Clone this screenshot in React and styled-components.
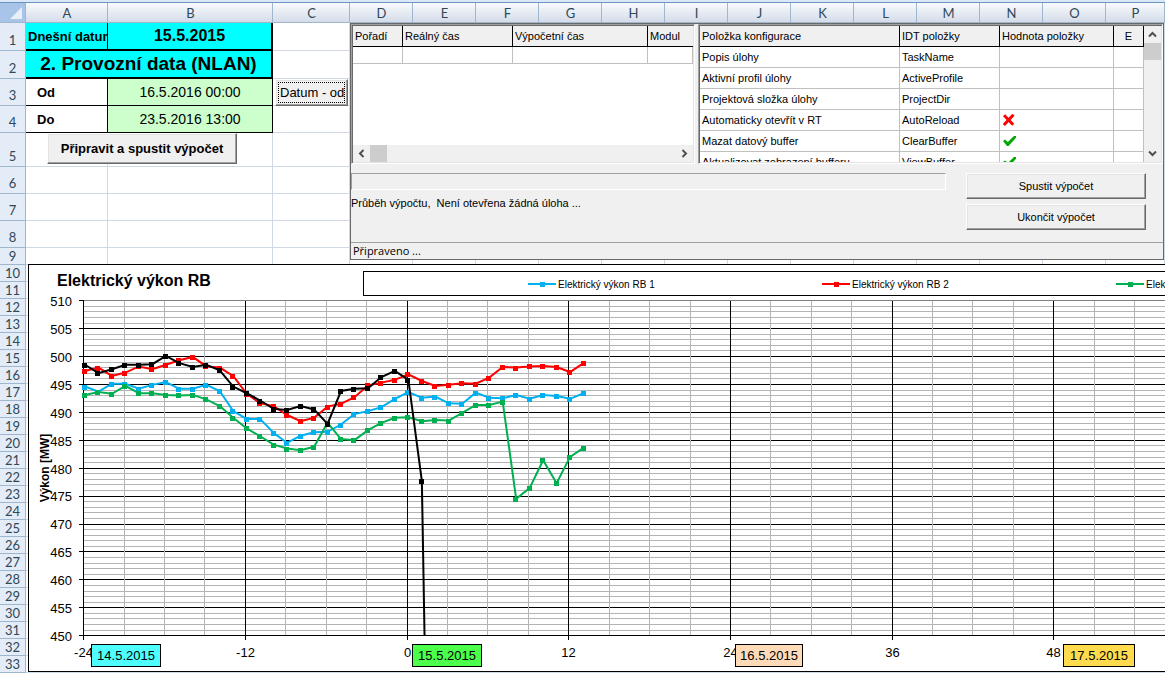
import styled, { createGlobalStyle } from 'styled-components';

const GlobalStyle = createGlobalStyle`
  * {
    box-sizing: border-box;
  }

  body {
    margin: 0;
    background: #fff;
    color: #000;
    font-family: 'Liberation Sans', Arial, sans-serif;
    overflow: hidden;
  }

  button {
    font-family: inherit;
    color: inherit;
    padding: 0;
  }

  table {
    border-collapse: separate;
    border-spacing: 0;
    table-layout: fixed;
  }
`;

const Page = styled.main`
  width: 100%;
  overflow: hidden;
  border-top: 2px solid #dbe8f7;
`;

/* the cells and the objects floating over them share one grid area */
const Sheet = styled.div`
  display: grid;
  grid-template-columns: minmax(0, 1fr);
  border-top: 1px solid #6d93c0;
  overflow: hidden;
`;

const CellTable = styled.table`
  grid-area: 1 / 1;
  width: 100%;
  min-width: 1150px;
`;

const Col = styled.col`
  width: ${(props) => props.$width}px;
`;

const Row = styled.tr`
  height: ${(props) => props.$height}px;
`;

const ColumnHead = styled.th`
  height: 20px;
  padding: 0 0 0 1px;
  border-right: 1px solid #9eb6ce;
  border-bottom: 1px solid #9eb6ce;
  background: linear-gradient(#f8fbfd, #d5dce9);
  color: #2f4858;
  font: 13px/18px Lato, sans-serif;
`;

const Corner = styled(ColumnHead)`
  background: #a9c4e9;
  text-align: right;
  vertical-align: bottom;

  svg {
    display: block;
    margin: 0 3px 3px auto;
  }
`;

const RowHead = styled.th`
  padding: 0 0 ${(props) => (props.$tall ? 2 : 0)}px;
  border-right: 1px solid #9eb6ce;
  border-bottom: 1px solid #9eb6ce;
  background: #e4ecf7;
  color: #2f4858;
  font: 13px/15px Lato, sans-serif;
  vertical-align: bottom;
`;

const Cell = styled.td`
  padding: 0;
  border-right: 1px solid #d0d7e5;
  border-bottom: 1px solid #d0d7e5;
  overflow: hidden;
  white-space: nowrap;
`;

const TodayLabel = styled(Cell)`
  padding-left: 2px;
  border-right: 1px solid #000;
  border-bottom: 2px solid #000;
  background: #0ff;
  font-size: 13px;
  font-weight: bold;
`;

const TodayValue = styled(Cell)`
  border-right: 2px solid #000;
  border-bottom: 2px solid #000;
  background: #0ff;
  font-size: 16px;
  font-weight: bold;
  text-align: center;
`;

const SectionTitle = styled(TodayValue)`
  font-size: 19px;
`;

const RangeLabel = styled(Cell)`
  padding-left: 11px;
  border-right: 1px solid #000;
  border-bottom: 1px solid #000;
  font-size: 13px;
  font-weight: bold;
`;

const RangeValue = styled(Cell)`
  border-right: 1px solid #000;
  border-bottom: 1px solid #000;
  background: #cfc;
  font-size: 14px;
  text-align: center;
`;

const Objects = styled.div`
  grid-area: 1 / 1;
  display: flex;
  flex-direction: column;
  gap: 4px;
  padding: 20px 0 0 28px;
`;

const TopObjects = styled.div`
  display: flex;
`;

const SheetButtons = styled.div`
  flex: 0 0 322px;
  display: flex;
  flex-direction: column;
  gap: 27px;
  padding: 56px 2px 0 19px;
`;

const RaisedButton = styled.button`
  border: 1px solid;
  border-color: #fff #696969 #696969 #fff;
  box-shadow: inset -1px -1px #a0a0a0, inset 1px 1px #e3e3e3;
  background: #f0f0f0;
`;

const DateButton = styled(RaisedButton)`
  align-self: flex-end;
  width: 73px;
  height: 27px;
  padding: 2px;
  font-size: 13px;
`;

const FocusFrame = styled.span`
  display: block;
  height: 21px;
  padding-left: 1px;
  border: 1px dotted #000;
  line-height: 19px;
  text-align: left;
  white-space: nowrap;
  overflow: hidden;
`;

const RunButton = styled(RaisedButton)`
  width: 190px;
  height: 31px;
  font-size: 13px;
  font-weight: bold;
`;

const Panel = styled.section`
  flex: 1;
  min-width: 0;
  margin-right: 1px;
  border: 1px solid #696969;
  background: #f0f0f0;
  font-size: 11px;
`;

const PanelGrids = styled.div`
  display: flex;
  gap: 3px;
`;

const Sunken = styled.div`
  flex: ${(props) => (props.$grow ? '1' : '0 0 344px')};
  min-width: 0;
  height: 140px;
  display: flex;
  flex-direction: ${(props) => (props.$grow ? 'row' : 'column')};
  border: 1px solid;
  border-color: #a0a0a0 #fff #fff #a0a0a0;
  background: #fff;
  box-shadow: inset 1px 1px #696969, inset -1px -1px #e3e3e3;
  padding: 1px;
`;

const GridView = styled.div`
  flex: 1;
  min-width: 0;
  overflow: hidden;

  table {
    width: 100%;
  }
`;

const GridHead = styled.th`
  height: 21px;
  padding: 0 2px;
  border-right: 1px solid #000;
  border-bottom: 1px solid #000;
  background: #f0f0f0;
  font-weight: normal;
  text-align: ${(props) => props.$align || 'left'};
  white-space: nowrap;

  &:last-child {
    border-right-width: ${(props) => (props.$open ? '0' : '1px')};
  }
`;

const GridCell = styled.td`
  height: ${(props) => (props.$low ? 17 : 21)}px;
  padding: 0 2px;
  border-right: 1px solid #c0c0c0;
  border-bottom: 1px solid #c0c0c0;
  white-space: nowrap;

  svg {
    display: block;
    margin-left: 1px;
  }
`;

const ScrollBar = styled.div`
  flex: 0 0 17px;
  display: flex;
  flex-direction: ${(props) => (props.$vertical ? 'column' : 'row')};
  background: #f0f0f0;
`;

const ScrollArrow = styled.button`
  width: 17px;
  height: 17px;
  border: 0;
  background: #f0f0f0;

  svg {
    display: block;
    margin: auto;
  }
`;

const Track = styled.div`
  flex: 1;
`;

const Thumb = styled.div`
  width: 17px;
  height: 17px;
  background: #cdcdcd;
`;

const PanelBody = styled.div`
  display: flex;
  gap: 20px;
  height: 78px;
  padding: 9px 17px 0 0;
`;

const Progress = styled.div`
  flex: 1;
  min-width: 0;
`;

const ProgressBar = styled.div`
  height: 17px;
  border: 1px solid;
  border-color: #a0a0a0 #fff #fff #a0a0a0;
`;

const ProgressText = styled.p`
  margin: 6px 0 0;
  line-height: 14px;
  white-space: pre;
`;

const PanelButtons = styled.div`
  display: flex;
  flex-direction: column;
  gap: 5px;
`;

const PanelButton = styled(RaisedButton)`
  width: 180px;
  height: 26px;
  font-size: 11px;
`;

const StatusBar = styled.div`
  height: 17px;
  padding-left: 2px;
  border-top: 1px solid #a0a0a0;
  font: 11px/16px 'Open Sans', sans-serif;
`;

const ChartFrame = styled.figure`
  position: relative;
  margin: 0;
  border: 1px solid #000;
  border-right: 0;
  background: #fff;
  overflow: hidden;
`;

const ChartHead = styled.figcaption`
  display: flex;
  height: 31px;
  padding-top: 6px;
`;

const ChartTitle = styled.h1`
  flex: 0 0 334px;
  margin: 0;
  padding-left: 28px;
  font-size: 16px;
  line-height: 19px;
`;

const Legend = styled.ul`
  flex: 1;
  min-width: 0;
  display: flex;
  height: 25px;
  margin: 0;
  padding: 1px 0 0 164px;
  border: 1px solid #000;
  border-right: 0;
  list-style: none;
  overflow: hidden;
`;

const LegendItem = styled.li`
  flex: 0 0 294px;
  display: flex;
  align-items: center;
  gap: 2px;
  font-size: 10px;
  white-space: nowrap;
`;

const Plot = styled.svg`
  display: block;
  width: 100%;
  height: 375px;
  font-size: 13px;
`;

const DayTag = styled.div`
  position: absolute;
  bottom: 4px;
  left: ${(props) => props.$left}px;
  width: ${(props) => props.$width}px;
  height: 23px;
  border: 1px solid #000;
  background: ${(props) => props.$color};
  font-size: 13px;
  line-height: 22px;
  text-align: center;
`;

const letters = 'ABCDEFGHIJKLMNOP'.split('');
// the last column takes what is left of the window
const columnWidths = [26, 82, 165, 77].concat(Array(12).fill(63));
const rowHeights = [28, 28, 27, 27, 34, 27, 27, 27].concat(Array(25).fill(17));

const configRows = [
  ['Popis úlohy', 'TaskName', null],
  ['Aktivní profil úlohy', 'ActiveProfile', null],
  ['Projektová složka úlohy', 'ProjectDir', null],
  ['Automaticky otevřít v RT', 'AutoReload', false],
  ['Mazat datový buffer', 'ClearBuffer', true],
  ['Aktualizovat zobrazení bufferu', 'ViewBuffer', true],
];

// hourly values in MW, the first one at -24 h
const series = [
  {
    name: 'Elektrický výkon RB 1',
    color: '#00b0f0',
    values: [
      494.5, 493.6, 495, 495, 494.1, 494.8, 495.3, 494.1, 494.1, 494.8, 493.7, 490.1, 488.7,
      488.7, 486.2, 484.4, 485.7, 486.3, 486.4, 487.7, 489.6, 490.1, 490.8, 492.3, 493.5,
      492.5, 492.7, 491.5, 491.4, 493.4, 492.5, 492.4, 493, 492.3, 493, 492.8, 492.3, 493.3,
    ],
  },
  {
    name: 'Elektrický výkon RB 2',
    color: '#ff0000',
    values: [
      497.3, 497.9, 496.4, 497, 498.1, 497.6, 498.4, 499.2, 499.8, 498.1, 497.9, 496.4, 493.2,
      491.5, 491, 489.4, 488.3, 488.9, 490.9, 491.4, 492.6, 494.7, 495.2, 495.7, 496.7,
      495.5, 494.6, 494.8, 495.1, 495, 496.1, 498, 497.9, 498.1, 498.2, 498, 497.1, 498.7,
    ],
  },
  {
    name: 'Elektrický výkon RB 3',
    color: '#00b050',
    values: [
      493, 493.5, 493.2, 494.6, 493.3, 493.3, 493, 492.9, 493, 492.2, 491, 488.9, 487,
      485.6, 484.1, 483.4, 483.1, 483.7, 488, 485.1, 484.9, 486.7, 488, 488.9, 489,
      488.3, 488.5, 488.4, 489.8, 491.2, 491.2, 491.8, 474.4, 476.3, 481.3, 477.2, 481.9, 483.5,
    ],
  },
];

// the total leaves the scale right after its last point
const total = {
  name: 'total',
  color: '#000000',
  drop: 25.2,
  values: [
    498.4, 496.9, 497.6, 498.4, 498.4, 498.5, 500, 498.7, 498, 498.4, 497.4, 494.5, 493.3,
    492, 490.5, 490.3, 491, 490.4, 487.8, 493.7, 494.1, 494.2, 496.2, 497.3, 495.7, 477.6,
  ],
};

const dayTags = [
  { day: '14.5.2015', left: 62, width: 70, color: '#4fffff' },
  { day: '15.5.2015', left: 383, width: 70, color: '#4bff4b' },
  { day: '16.5.2015', left: 706, width: 68, color: '#ffdab9' },
  { day: '17.5.2015', left: 1034, width: 72, color: '#ffdb4d' },
];

const PLOT_LEFT = 54;
const PLOT_TOP = 4;
const PLOT_BOTTOM = 339;

const xOf = (hours) => PLOT_LEFT + (hours + 24) * 13.474;
const yOf = (mw) => PLOT_TOP + ((510 - mw) * (PLOT_BOTTOM - PLOT_TOP)) / 60;
const snap = (value) => Math.round(value + 0.2) + 0.5;

const powerSteps = Array.from({ length: 61 }, (_, i) => 450 + i);
const hourSteps = Array.from({ length: 27 }, (_, i) => -24 + i * 3);

function Chevron({ direction }) {
  const points = {
    left: '6.5,1 3,4.5 6.5,8',
    right: '2.5,1 6,4.5 2.5,8',
    up: '1,6.5 4.5,3 8,6.5',
    down: '1,2.5 4.5,6 8,2.5',
  };
  return (
    <svg width="9" height="9" viewBox="0 0 9 9" aria-hidden="true">
      <polyline points={points[direction]} fill="none" stroke="#505050" strokeWidth="2" />
    </svg>
  );
}

function StateIcon({ on }) {
  return on ? (
    <svg width="14" height="12" viewBox="0 0 14 12" role="img" aria-label="ano">
      <path d="M0 6 L2 4.5 L4.8 7 L11 1 L13 1 L13 2.8 L5.5 11 L4 11 Z" fill="#00a800" />
    </svg>
  ) : (
    <svg width="13" height="12" viewBox="0 0 13 12" role="img" aria-label="ne">
      <path d="M1 1.2 L10.2 10.8 M10.5 0.8 L0.8 11" stroke="#f00" strokeWidth="3" fill="none" />
    </svg>
  );
}

function CellContent({ row, column }) {
  if (row === 1 && column === 'A') return <TodayLabel>Dnešní datum</TodayLabel>;
  if (row === 1 && column === 'B') return <TodayValue>15.5.2015</TodayValue>;
  if (row === 2 && column === 'A')
    return <SectionTitle colSpan={2}>2. Provozní data (NLAN)</SectionTitle>;
  if (row === 2 && column === 'B') return null;
  if (row === 3 && column === 'A') return <RangeLabel>Od</RangeLabel>;
  if (row === 3 && column === 'B') return <RangeValue>16.5.2016 00:00</RangeValue>;
  if (row === 4 && column === 'A') return <RangeLabel>Do</RangeLabel>;
  if (row === 4 && column === 'B') return <RangeValue>23.5.2016 13:00</RangeValue>;
  return <Cell />;
}

function Cells() {
  return (
    <CellTable>
      <colgroup>
        {columnWidths.map((width, i) => (
          <Col key={i} $width={width} />
        ))}
        <col />
      </colgroup>
      <thead>
        <tr>
          <Corner>
            <svg width="12" height="12" aria-hidden="true">
              <path d="M12 0 V12 H0 Z" fill="#e9eff8" />
            </svg>
          </Corner>
          {letters.map((letter) => (
            <ColumnHead key={letter}>{letter}</ColumnHead>
          ))}
        </tr>
      </thead>
      <tbody>
        {rowHeights.map((height, i) => (
          <Row key={i} $height={height}>
            <RowHead $tall={height > 17}>{i + 1}</RowHead>
            {letters.map((letter) => (
              <CellContent key={letter} row={i + 1} column={letter} />
            ))}
          </Row>
        ))}
      </tbody>
    </CellTable>
  );
}

function RunLog() {
  return (
    <Sunken>
      <GridView>
        <table>
          <colgroup>
            <Col $width={50} />
            <Col $width={110} />
            <Col $width={135} />
            <col />
          </colgroup>
          <thead>
            <tr>
              <GridHead>Pořadí</GridHead>
              <GridHead>Reálný čas</GridHead>
              <GridHead>Výpočetní čas</GridHead>
              <GridHead $open>Modul</GridHead>
            </tr>
          </thead>
          <tbody>
            <tr>
              <GridCell $low />
              <GridCell $low />
              <GridCell $low />
              <GridCell $low />
            </tr>
          </tbody>
        </table>
      </GridView>
      <ScrollBar>
        <ScrollArrow aria-label="Vlevo">
          <Chevron direction="left" />
        </ScrollArrow>
        <Thumb />
        <Track />
        <ScrollArrow aria-label="Vpravo">
          <Chevron direction="right" />
        </ScrollArrow>
      </ScrollBar>
    </Sunken>
  );
}

function Configuration() {
  return (
    <Sunken $grow>
      <GridView>
        <table>
          <colgroup>
            <Col $width={200} />
            <Col $width={100} />
            <col />
            <Col $width={30} />
          </colgroup>
          <thead>
            <tr>
              <GridHead>Položka konfigurace</GridHead>
              <GridHead>IDT položky</GridHead>
              <GridHead>Hodnota položky</GridHead>
              <GridHead $align="center">E</GridHead>
            </tr>
          </thead>
          <tbody>
            {configRows.map(([label, id, state]) => (
              <tr key={id}>
                <GridCell>{label}</GridCell>
                <GridCell>{id}</GridCell>
                <GridCell>{state !== null && <StateIcon on={state} />}</GridCell>
                <GridCell />
              </tr>
            ))}
          </tbody>
        </table>
      </GridView>
      <ScrollBar $vertical>
        <ScrollArrow aria-label="Nahoru">
          <Chevron direction="up" />
        </ScrollArrow>
        <Thumb />
        <Track />
        <ScrollArrow aria-label="Dolů">
          <Chevron direction="down" />
        </ScrollArrow>
      </ScrollBar>
    </Sunken>
  );
}

function ControlPanel() {
  return (
    <Panel>
      <PanelGrids>
        <RunLog />
        <Configuration />
      </PanelGrids>
      <PanelBody>
        <Progress>
          <ProgressBar role="progressbar" aria-valuenow={0} aria-label="Průběh výpočtu" />
          <ProgressText>{'Průběh výpočtu,  Není otevřena žádná úloha ...'}</ProgressText>
        </Progress>
        <PanelButtons>
          <PanelButton>Spustit výpočet</PanelButton>
          <PanelButton>Ukončit výpočet</PanelButton>
        </PanelButtons>
      </PanelBody>
      <StatusBar>Připraveno ...</StatusBar>
    </Panel>
  );
}

function SeriesLine({ color, values, drop }) {
  const points = values.map((mw, i) => [xOf(i - 24) + 2, yOf(mw)]);
  const line = drop ? [...points, [xOf(drop - 24) + 2, PLOT_BOTTOM + 1]] : points;
  return (
    <g fill={color}>
      <polyline
        points={line.map(([x, y]) => `${x},${y}`).join(' ')}
        fill="none"
        stroke={color}
        strokeWidth="2"
      />
      {points.map(([x, y], i) => (
        <rect key={i} x={Math.round(x) - 3} y={Math.round(y) - 2} width="5" height="5" />
      ))}
    </g>
  );
}

function PowerChart() {
  return (
    <ChartFrame>
      <ChartHead>
        <ChartTitle>Elektrický výkon RB</ChartTitle>
        <Legend>
          {series.map(({ name, color }) => (
            <LegendItem key={name}>
              <svg width="28" height="6" aria-hidden="true">
                <path d="M0 3 H28" stroke={color} strokeWidth="2" />
                <rect x="12" y="1" width="5" height="5" fill={color} />
              </svg>
              {name}
            </LegendItem>
          ))}
        </Legend>
      </ChartHead>
      <Plot>
        {powerSteps.map((mw) => {
          const major = mw % 5 === 0 && mw !== 510;
          const color = mw === 510 ? '#808080' : '#b4b4b4';
          return (
            <line
              key={mw}
              x1={PLOT_LEFT}
              x2="100%"
              y1={snap(yOf(mw))}
              y2={snap(yOf(mw))}
              stroke={major ? '#000' : color}
            />
          );
        })}
        {hourSteps.map((hour) => (
          <path
            key={hour}
            d={`M${snap(xOf(hour))} ${PLOT_TOP + 1} V${PLOT_BOTTOM + (hour % 12 ? 0 : 5)}`}
            stroke={hour % 12 ? '#b4b4b4' : '#000'}
          />
        ))}
        {powerSteps
          .filter((mw) => mw % 5 === 0)
          .map((mw) => (
            <g key={mw}>
              <path d={`M${PLOT_LEFT - 4} ${snap(yOf(mw))} h5`} stroke="#000" />
              <text x={PLOT_LEFT - 11} y={Math.round(yOf(mw)) + 6} textAnchor="end">
                {mw}
              </text>
            </g>
          ))}
        {[-24, -12, 0, 12, 24, 36, 48].map((hour) => (
          <text key={hour} x={snap(xOf(hour))} y={PLOT_BOTTOM + 22} textAnchor="middle">
            {hour}
          </text>
        ))}
        <text
          transform="translate(20 172) rotate(-90)"
          textAnchor="middle"
          fontWeight="bold"
          fontSize="12"
        >
          Výkon [MW]
        </text>
        {[...series, total].map((item) => (
          <SeriesLine key={item.name} {...item} />
        ))}
      </Plot>
      {dayTags.map(({ day, left, width, color }) => (
        <DayTag key={day} $left={left} $width={width} $color={color}>
          {day}
        </DayTag>
      ))}
    </ChartFrame>
  );
}

const App = () => {
  return (
    <Page>
      <GlobalStyle />
      <Sheet>
        <Cells />
        <Objects>
          <TopObjects>
            <SheetButtons>
              <DateButton>
                <FocusFrame>Datum - od</FocusFrame>
              </DateButton>
              <RunButton>Připravit a spustit výpočet</RunButton>
            </SheetButtons>
            <ControlPanel />
          </TopObjects>
          <PowerChart />
        </Objects>
      </Sheet>
    </Page>
  );
};

export default App;
